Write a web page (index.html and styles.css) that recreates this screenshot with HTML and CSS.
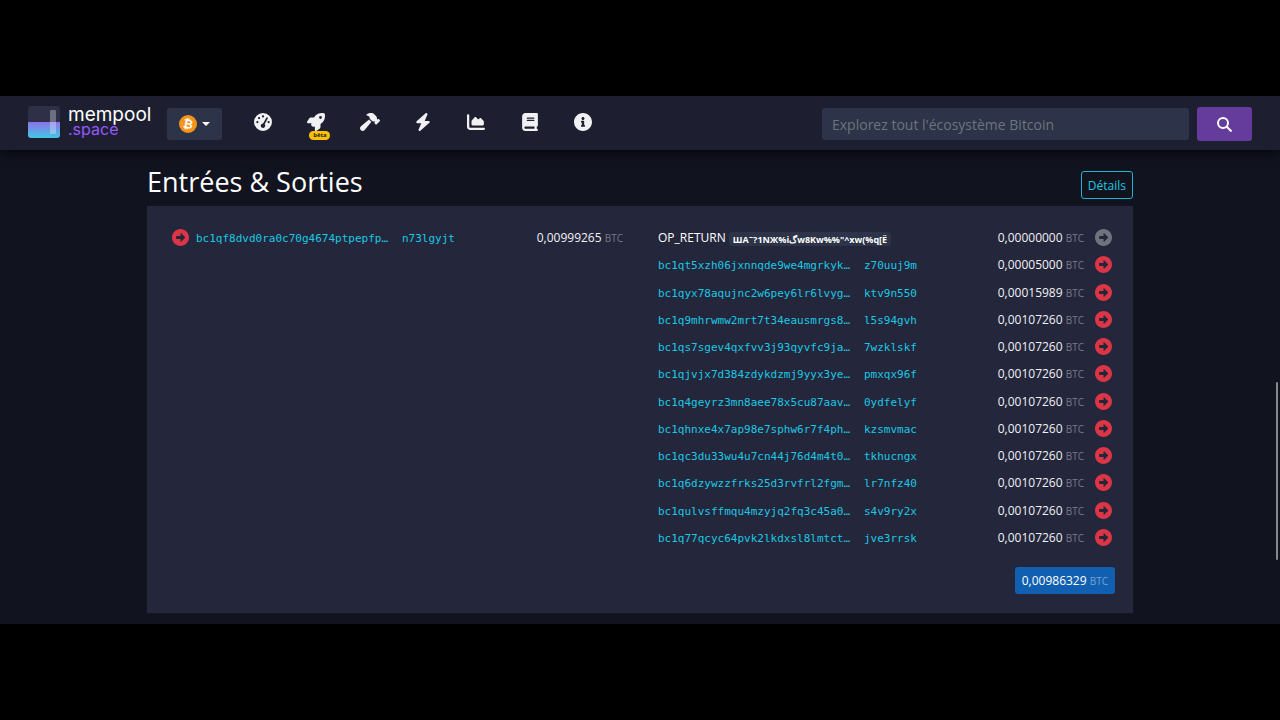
FILE: index.html
```html
<!DOCTYPE html>
<html lang="fr">
<head>
<meta charset="utf-8">
<meta name="viewport" content="width=device-width, initial-scale=1">
<title>mempool.space – Entrées &amp; Sorties</title>
<link rel="stylesheet" href="styles.css">
</head>
<body>
<svg class="sprite" aria-hidden="true">
  <symbol id="arrow" viewBox="8 8 496 496"><path d="M256 8c137 0 248 111 248 248S393 504 256 504 8 393 8 256 119 8 256 8zM140 300h116v70.9c0 10.7 13 16.1 20.5 8.5l114.3-114.9c4.7-4.7 4.7-12.2 0-16.9l-114.3-115c-7.6-7.6-20.5-2.2-20.5 8.5V212H140c-6.6 0-12 5.4-12 12v64c0 6.6 5.4 12 12 12z"/></symbol>
</svg>
<div class="app">
  <header class="navbar">
    <a class="brand" href="#" aria-label="mempool.space">
      <svg class="brand-mark" viewBox="0 0 32 32" aria-hidden="true">
        <defs>
          <linearGradient id="fill" x1="0" y1="0" x2="0" y2="1"><stop offset="0" stop-color="#8c72e8"/><stop offset="1" stop-color="#42c8e6"/></linearGradient>
          <clipPath id="round"><rect width="32" height="32" rx="3"/></clipPath>
        </defs>
        <g clip-path="url(#round)">
          <rect width="32" height="32" fill="#2e3048"/>
          <rect y="16" width="32" height="16" fill="url(#fill)"/>
          <rect x="22" y="4" width="6" height="24" rx="1" fill="#fff" opacity=".3"/>
        </g>
      </svg>
      <span class="brand-text"><span>mempool</span><span class="brand-space">.space</span></span>
    </a>
    <button class="network" type="button" aria-label="Bitcoin">
      <svg class="coin" viewBox="0 0 18 18" aria-hidden="true"><circle cx="9" cy="9" r="9" fill="#f7931a"/><text x="9" y="13" text-anchor="middle" transform="rotate(12 9 9)" class="coin-sign">₿</text></svg>
      <span class="caret"></span>
    </button>
    <nav class="menu">
      <a href="#" aria-label="Tableau de bord"><svg viewBox="0 0 512 512"><path fill-rule="evenodd" d="M256 0a256 256 0 1 0 0 512 256 256 0 1 0 0-512zM256 64a32 32 0 1 1 0 64 32 32 0 1 1 0-64zM144 112a32 32 0 1 1 0 64 32 32 0 1 1 0-64zM96 224a32 32 0 1 1 0 64 32 32 0 1 1 0-64zM416 224a32 32 0 1 1 0 64 32 32 0 1 1 0-64zM380 122c12 5 17 19 12 31L303 319c10 11 17 26 17 41 0 35-29 64-64 64s-64-29-64-64 29-64 64-64h3l90-162c5-12 19-17 31-12z"/></svg></a>
      <a href="#" aria-label="Accélérateur bêta"><svg viewBox="0 0 512 512"><path d="M156.6 384.9L125.7 354c-8.5-8.5-11.5-20.8-7.7-32.2c3-8.9 7-20.5 11.8-33.8L24 288c-8.6 0-16.6-4.6-20.9-12.1s-4.2-16.7 .2-24.1l52.5-88.5c13-21.9 36.5-35.3 61.9-35.3l82.3 0c2.4-4 4.8-7.7 7.2-11.3C289.1-4.1 411.1-8.1 483.9 5.3c11.6 2.1 20.6 11.2 22.8 22.8c13.4 72.9 9.3 194.8-111.4 276.7c-3.5 2.4-7.3 4.8-11.3 7.2v82.3c0 25.4-13.4 49-35.3 61.9l-88.5 52.5c-7.4 4.4-16.6 4.5-24.1 .2s-12.1-12.2-12.1-20.9V380.8c-14.1 4.9-26.4 8.9-35.7 11.9c-11.2 3.6-23.4 .5-31.8-7.8zM384 168a40 40 0 1 0 0-80 40 40 0 1 0 0 80z"/></svg><span class="beta">bêta</span></a>
      <a href="#" aria-label="Minage"><svg class="wide" viewBox="0 0 576 512"><path d="M413.5 237.5c-28.2 4.8-58.2-3.6-80-25.4l-38.1-38.1C280.4 159 272 138.8 272 117.6V105.5L192.3 62c-5.3-2.9-8.6-8.6-8.3-14.7s3.9-11.5 9.5-14l47.2-21C259.1 4.2 279 0 299.2 0h18.1c36.7 0 72 14 98.7 39.1l44.6 42c24.2 22.8 33.2 55.7 26.6 86L503 183l8-8c9.4-9.4 24.6-9.4 33.9 0l24 24c9.4 9.4 9.4 24.6 0 33.9l-88 88c-9.4 9.4-24.6 9.4-33.9 0l-24-24c-9.4-9.4-9.4-24.6 0-33.9l8-8-17.5-17.5zM27.4 377.1L260.9 182.6c3.5 4.9 7.5 9.6 11.8 14l38.1 38.1c6 6 12.4 11.2 19.2 15.7L134.9 484.6c-14.5 17.4-36 27.4-58.6 27.4C34.1 512 0 477.8 0 435.7c0-22.6 10.1-44.1 27.4-58.6z"/></svg></a>
      <a href="#" aria-label="Lightning"><svg viewBox="0 0 448 512"><path d="M349.4 44.6c5.9-13.7 1.5-29.7-10.6-38.5s-28.6-8-39.9 1.8l-256 224c-10 8.8-13.6 22.9-8.9 35.3S50.7 288 64 288H175.5L98.6 467.4c-5.9 13.7-1.5 29.7 10.6 38.5s28.6 8 39.9-1.8l256-224c10-8.8 13.6-22.9 8.9-35.3s-16.6-20.7-30-20.7H272.5L349.4 44.6z"/></svg></a>
      <a href="#" aria-label="Graphiques"><svg viewBox="0 0 512 512"><path d="M64 64c0-17.7-14.3-32-32-32S0 46.3 0 64V400c0 44.2 35.8 80 80 80H480c17.7 0 32-14.3 32-32s-14.3-32-32-32H80c-8.8 0-16-7.2-16-16V64zm96 288H448c17.7 0 32-14.3 32-32V251.8c0-7.6-2.7-15-7.7-20.8l-65.8-76.8c-12.1-14.2-33.7-15-46.9-1.8l-21 21c-10 10-26.4 9.2-35.4-1.6l-39.2-47c-12.6-15.1-35.7-15.4-48.7-.6L135.9 215c-5.1 5.8-7.9 13.3-7.9 21.1v84c0 17.7 14.3 32 32 32z"/></svg></a>
      <a href="#" aria-label="Documentation"><svg viewBox="0 0 448 512"><path d="M96 0C43 0 0 43 0 96V416c0 53 43 96 96 96H384h32c17.7 0 32-14.3 32-32s-14.3-32-32-32V384c17.7 0 32-14.3 32-32V32c0-17.7-14.3-32-32-32H384 96zm0 384H352v64H96c-17.7 0-32-14.3-32-32s14.3-32 32-32zm32-240c0-8.8 7.2-16 16-16H336c8.8 0 16 7.2 16 16s-7.2 16-16 16H144c-8.8 0-16-7.2-16-16zm16 48H336c8.8 0 16 7.2 16 16s-7.2 16-16 16H144c-8.8 0-16-7.2-16-16s7.2-16 16-16z"/></svg></a>
      <a href="#" aria-label="À propos"><svg viewBox="8 8 496 496"><path d="M256 8C119.043 8 8 119.083 8 256c0 136.997 111.043 248 248 248s248-111.003 248-248C504 119.083 392.957 8 256 8zm0 110c23.196 0 42 18.804 42 42s-18.804 42-42 42-42-18.804-42-42 18.804-42 42-42zm56 254c0 6.627-5.373 12-12 12h-88c-6.627 0-12-5.373-12-12v-24c0-6.627 5.373-12 12-12h12v-64h-12c-6.627 0-12-5.373-12-12v-24c0-6.627 5.373-12 12-12h64c6.627 0 12 5.373 12 12v100h12c6.627 0 12 5.373 12 12v24z"/></svg></a>
    </nav>
    <form class="search">
      <input type="text" placeholder="Explorez tout l'écosystème Bitcoin" aria-label="Explorez tout l'écosystème Bitcoin">
      <button type="button" aria-label="Rechercher"><svg viewBox="0 0 15 15" fill="none" stroke="#fff" stroke-width="2"><circle cx="6" cy="6" r="5"/><path d="M9.5 9.5l5 5"/></svg></button>
    </form>
  </header>

  <main class="content">
    <div class="title-row">
      <h2>Entrées &amp; Sorties</h2>
      <button class="details" type="button">Détails</button>
    </div>
    <section class="panel">
      <div class="columns">
        <table class="inputs">
          <tr><td class="icon"><svg class="arrow"><use href="#arrow"/></svg></td><td><a class="address" href="#"><span>bc1qf8dvd0ra0c70g4674ptpepfp…</span><span>n73lgyjt</span></a></td><td class="amount">0,00999265 <small>BTC</small></td></tr>
        </table>
        <table class="outputs">
          <tr><td>OP_RETURN <span class="message" dir="ltr">ША˜?1NЖ%iگw8Kw%%"^xw(%q[Ё</span></td><td class="amount">0,00000000 <small>BTC</small></td><td class="icon"><svg class="arrow muted"><use href="#arrow"/></svg></td></tr>
          <tr><td><a class="address" href="#"><span>bc1qt5xzh06jxnnqde9we4mgrkyk…</span><span>z70uuj9m</span></a></td><td class="amount">0,00005000 <small>BTC</small></td><td class="icon"><svg class="arrow"><use href="#arrow"/></svg></td></tr>
          <tr><td><a class="address" href="#"><span>bc1qyx78aqujnc2w6pey6lr6lvyg…</span><span>ktv9n550</span></a></td><td class="amount">0,00015989 <small>BTC</small></td><td class="icon"><svg class="arrow"><use href="#arrow"/></svg></td></tr>
          <tr><td><a class="address" href="#"><span>bc1q9mhrwmw2mrt7t34eausmrgs8…</span><span>l5s94gvh</span></a></td><td class="amount">0,00107260 <small>BTC</small></td><td class="icon"><svg class="arrow"><use href="#arrow"/></svg></td></tr>
          <tr><td><a class="address" href="#"><span>bc1qs7sgev4qxfvv3j93qyvfc9ja…</span><span>7wzklskf</span></a></td><td class="amount">0,00107260 <small>BTC</small></td><td class="icon"><svg class="arrow"><use href="#arrow"/></svg></td></tr>
          <tr><td><a class="address" href="#"><span>bc1qjvjx7d384zdykdzmj9yyx3ye…</span><span>pmxqx96f</span></a></td><td class="amount">0,00107260 <small>BTC</small></td><td class="icon"><svg class="arrow"><use href="#arrow"/></svg></td></tr>
          <tr><td><a class="address" href="#"><span>bc1q4geyrz3mn8aee78x5cu87aav…</span><span>0ydfelyf</span></a></td><td class="amount">0,00107260 <small>BTC</small></td><td class="icon"><svg class="arrow"><use href="#arrow"/></svg></td></tr>
          <tr><td><a class="address" href="#"><span>bc1qhnxe4x7ap98e7sphw6r7f4ph…</span><span>kzsmvmac</span></a></td><td class="amount">0,00107260 <small>BTC</small></td><td class="icon"><svg class="arrow"><use href="#arrow"/></svg></td></tr>
          <tr><td><a class="address" href="#"><span>bc1qc3du33wu4u7cn44j76d4m4t0…</span><span>tkhucngx</span></a></td><td class="amount">0,00107260 <small>BTC</small></td><td class="icon"><svg class="arrow"><use href="#arrow"/></svg></td></tr>
          <tr><td><a class="address" href="#"><span>bc1q6dzywzzfrks25d3rvfrl2fgm…</span><span>lr7nfz40</span></a></td><td class="amount">0,00107260 <small>BTC</small></td><td class="icon"><svg class="arrow"><use href="#arrow"/></svg></td></tr>
          <tr><td><a class="address" href="#"><span>bc1qulvsffmqu4mzyjq2fq3c45a0…</span><span>s4v9ry2x</span></a></td><td class="amount">0,00107260 <small>BTC</small></td><td class="icon"><svg class="arrow"><use href="#arrow"/></svg></td></tr>
          <tr><td><a class="address" href="#"><span>bc1q77qcyc64pvk2lkdxsl8lmtct…</span><span>jve3rrsk</span></a></td><td class="amount">0,00107260 <small>BTC</small></td><td class="icon"><svg class="arrow"><use href="#arrow"/></svg></td></tr>
        </table>
      </div>
      <div class="total-row"><button class="total" type="button">0,00986329 <small>BTC</small></button></div>
    </section>
  </main>
  <div class="scroll-thumb"></div>
</div>
</body>
</html>
```

FILE: styles.css
```css
* { box-sizing: border-box; }

body {
  margin: 0;
  min-height: 100vh;
  padding: 96px 0;
  background: #000;
  color: #fff;
  font: 12px/18px "Open Sans", "Noto Sans", sans-serif;
}

a { color: inherit; text-decoration: none; }
button, input { font: inherit; color: inherit; border: 0; }
.sprite { position: absolute; width: 0; height: 0; }

.app { position: relative; background: #11131f; }

.navbar {
  position: relative;
  display: flex;
  align-items: center;
  min-height: 54px;
  padding: 2px 28px 0;
  background: #1d1f31;
  box-shadow: 0 0 15px 0 #000;
  clip-path: inset(0 0 -20px 0);
}

.brand { display: flex; align-items: center; gap: 8px; width: 139px; padding-bottom: 4px; }
.brand-mark { width: 32px; height: 32px; }
.brand-text { display: flex; flex-direction: column; font: 19px/15px Inter, sans-serif; }
.brand-space { color: #9857ff; font-size: 16px; }

.network {
  display: flex;
  align-items: center;
  justify-content: center;
  gap: 5px;
  width: 55px;
  height: 32px;
  padding: 0;
  border-radius: 3px;
  background: #2d3348;
}
.coin { width: 18px; height: 18px; }
.coin-sign { font: bold 12px "DejaVu Sans", sans-serif; fill: #fff; }
.caret { border: 4px solid transparent; border-top-color: #fff; border-bottom: 0; }

.menu { display: flex; width: 374px; margin-left: 14px; }
.menu a { position: relative; display: flex; flex: 1; justify-content: center; padding-bottom: 4px; }
.menu svg { width: 18px; height: 18px; fill: #f1f1f3; }
.menu .wide { width: 20px; }
.beta {
  position: absolute;
  top: 18px;
  left: 20px;
  width: 21px;
  border-radius: 5px;
  background: #ffc107;
  color: #212529;
  font: bold 6px/9px "Open Sans", sans-serif;
  text-align: center;
}

.search { display: flex; align-items: center; gap: 8px; width: 430px; margin-left: auto; }
.search input {
  flex: 1;
  min-width: 0;
  height: 32px;
  padding: 0 10px;
  border-radius: 3px;
  background: #2d3348;
  font-size: 14px;
}
.search input::placeholder { color: #6c757d; opacity: 1; }
.search button {
  display: flex;
  align-items: center;
  justify-content: center;
  width: 55px;
  height: 34px;
  border-radius: 3px;
  background: #653b9c;
}
.search button svg { width: 15px; height: 15px; }

.content { max-width: 986px; margin: 0 auto; padding: 16px 0 11px; }

.title-row { display: flex; justify-content: space-between; align-items: center; min-height: 40px; }
.title-row h2 { margin: 0 0 8px; font-size: 27px; line-height: 32px; font-weight: 400; }
.details {
  height: 28px;
  margin-bottom: 2px;
  padding: 1px 6px 0;
  border: 1px solid #1bb5cd;
  border-radius: 3px;
  background: transparent;
  color: #1bc8e2;
}

.panel { padding: 18px 18px 19px 25px; background: #24263c; box-shadow: 0 0 2px #1b1d2e; }
.columns { display: grid; grid-template-columns: 451px 457px; justify-content: space-between; align-items: start; }
table { width: 100%; border-collapse: collapse; }
td { height: 27px; padding: 1px 0 0; white-space: nowrap; }
.outputs { height: 327px; }
.amount { text-align: right; color: #f1f1f4; }
small { font-size: 10px; color: #777a8a; }
td.icon { width: 31px; padding: 0; }
.outputs .icon { text-align: right; padding-right: 3px; }
.inputs .icon { width: 24px; }
.arrow { display: block; width: 17px; height: 17px; fill: #dc3545; }
.outputs .arrow { margin-left: auto; }
.muted { fill: #6c757d; }

.address {
  display: inline-grid;
  grid-template-columns: 206px auto;
  color: #1bc8e2;
  font: 11px/16px "DejaVu Sans Mono", monospace;
}

.message {
  display: inline-block;
  padding: 1px 4px 0;
  border-radius: 3px;
  background: #2d3348;
  font-size: 9px;
  line-height: 13px;
  font-weight: 700;
  vertical-align: -1px;
}

.total-row { display: flex; justify-content: flex-end; margin-top: 16px; }
.total { height: 27px; padding: 1px 7px 0; border-radius: 3px; background: #105fb0; }
.total small { color: #75a3d2; }

.scroll-thumb {
  position: absolute;
  right: 2px;
  bottom: 64px;
  width: 2px;
  height: 178px;
  border-radius: 1px;
  background: #88888c;
}
```
